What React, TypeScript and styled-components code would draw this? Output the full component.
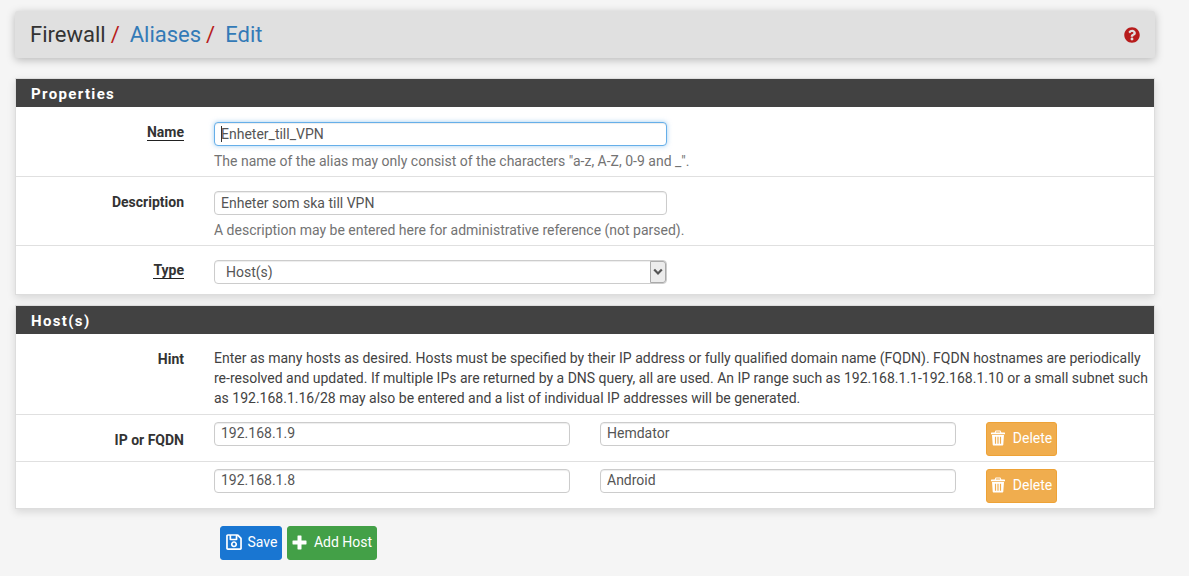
import styled, { createGlobalStyle } from "styled-components";
import { FaQuestionCircle, FaRegSave } from "react-icons/fa";

const GlobalStyle = createGlobalStyle`
  html, body {
    margin: 0;
    padding: 0;
    height: 576px;
    overflow: hidden;
    background: #f5f5f5;
    font-family: Roboto, "Liberation Sans", sans-serif;
    font-size: 14px;
    color: #212121;
  }
  * {
    box-sizing: border-box;
  }
`;

const Page = styled.div`
  padding: 11px 34px 0 15px;
  width: 1189px;
`;

const Breadcrumb = styled.div`
  display: flex;
  align-items: center;
  justify-content: space-between;
  height: 47px;
  padding: 0 15px;
  margin-bottom: 20px;
  background: #e0e0e0;
  border-radius: 3px;
  box-shadow: 0 2px 8px rgba(0, 0, 0, 0.25);
`;

const Crumbs = styled.div`
  display: flex;
  align-items: baseline;
  font-size: 22px;
  line-height: 28px;
`;

const Crumb = styled.span<{ $link?: boolean }>`
  color: ${props => (props.$link ? "#337ab7" : "#333")};
`;

const Slash = styled.span`
  color: #b71c1c;
  margin: 0 10px 0 5px;
`;

const HelpIcon = styled(FaQuestionCircle)`
  width: 16px;
  height: 16px;
  color: #b71c1c;
`;

const Panel = styled.section`
  background: #fff;
  border: 1px solid #ddd;
  margin-bottom: 10px;
  box-shadow: 0 3px 8px rgba(0, 0, 0, 0.12);
`;

const PanelHeading = styled.h2`
  margin: 0;
  height: 28px;
  padding: 0 15px;
  background: #424242;
  color: #fff;
  font-size: 15px;
  font-weight: 700;
  letter-spacing: 1.35px;
  line-height: 30px;
`;

const FormRow = styled.div<{ $height: number; $last?: boolean }>`
  display: grid;
  grid-template-columns: 198px 1fr;
  height: ${props => props.$height}px;
  border-bottom: ${props => (props.$last ? "0" : "1px solid #e0e0e0")};
`;

const Label = styled.div<{ $required?: boolean; $top?: number }>`
  justify-self: end;
  margin-right: 30px;
  padding-top: ${props => props.$top ?? 16}px;
  height: fit-content;
  font-size: 14px;
  line-height: 18px;
  font-weight: 700;
  color: #333;
  span {
    border-bottom: ${props => (props.$required ? "1px solid #212121" : "0")};
    display: inline-block;
    line-height: 16px;
  }
`;

const Field = styled.div<{ $top?: number }>`
  padding-top: ${props => props.$top ?? 15}px;
  min-width: 0;
`;

const InputWrap = styled.div<{ $width: number }>`
  position: relative;
  width: ${props => props.$width}px;
`;

const TextInput = styled.input<{ $focused?: boolean; $raised?: boolean }>`
  display: block;
  width: 100%;
  height: 24px;
  padding: 0 6px ${props => (props.$raised ? "2px" : "0")};
  border: 1px solid ${props => (props.$focused ? "#66afe9" : "#ccc")};
  border-radius: 4px;
  outline: 0;
  background: #fff;
  color: #555;
  font-family: Roboto, "Liberation Sans", sans-serif;
  font-size: 14px;
  box-shadow: ${props =>
    props.$focused
      ? "inset 0 1px 1px rgba(0,0,0,.075), 0 0 5px rgba(102,175,233,.6)"
      : "inset 0 1px 1px rgba(0,0,0,.075)"};
`;

const Caret = styled.i`
  position: absolute;
  left: 7px;
  top: 4px;
  width: 1px;
  height: 16px;
  background: #333;
`;

const SelectBox = styled.select`
  display: block;
  width: 100%;
  height: 24px;
  padding: 0 6px 0 11px;
  appearance: none;
  border: 1px solid #ccc;
  border-radius: 4px;
  outline: 0;
  background: #fff;
  color: #555;
  font-family: Roboto, "Liberation Sans", sans-serif;
  font-size: 14px;
  box-shadow: inset 0 1px 1px rgba(0, 0, 0, 0.075);
`;

const SelectArrow = styled.span`
  position: absolute;
  right: 1px;
  top: 1px;
  bottom: 1px;
  width: 16px;
  display: flex;
  align-items: center;
  justify-content: center;
  background: #ececec;
  border: 1px solid #aaa;
  border-radius: 0 3px 3px 0;
`;

const HelpText = styled.p`
  margin: 6px 0 0;
  font-size: 14px;
  line-height: 18px;
  color: #737373;
`;

const HintText = styled.p`
  margin: 0;
  padding-right: 5px;
  font-size: 14px;
  line-height: 20px;
  color: #424242;
`;

const HostFields = styled.div`
  display: flex;
  gap: 30px;
  padding-top: 7px;
`;

const ActionButton = styled.button<{ $bg: string; $border: string; $width: number; $gap: number }>`
  display: flex;
  align-items: center;
  justify-content: center;
  gap: ${props => props.$gap}px;
  width: ${props => props.$width}px;
  height: 34px;
  padding: 0 0 2px;
  border: 1px solid ${props => props.$border};
  border-radius: 3px;
  background: ${props => props.$bg};
  color: #fff;
  font-family: Roboto, "Liberation Sans", sans-serif;
  font-size: 14px;
  svg {
    flex: none;
  }
`;

const Toolbar = styled.div`
  display: flex;
  gap: 5px;
  padding: 7px 0 0 205px;
`;

function TrashIcon() {
  return (
    <svg width="14" height="16" viewBox="0 0 14 16" fill="#fff" fillRule="evenodd">
      <path d="M4.6.4h4.8l1 2.1h3.1c.3 0 .5.2.5.5v1.3H0V3c0-.3.2-.5.5-.5h3.100zM5.200 1.500l-.4 1h4.400l-.4-1z" />
      <path d="M1 5h12l-.7 9.600c0 .6-.5 1-1 1H2.700c-.5 0-1-.4-1-1zM3.900 6.800v7h1.200v-7zM6.400 6.800v7h1.200v-7zM8.900 6.800v7h1.200v-7z" />
    </svg>
  );
}

function PlusIcon() {
  return (
    <svg width="15" height="15" viewBox="0 0 15 15" fill="#fff">
      <path d="M5.500 1c0-.3.2-.5.5-.5h3c.3 0 .5.2.5.5v4.500H14c.3 0 .5.2.5.5v3c0 .3-.2.5-.5.5H9.500V14c0 .3-.2.5-.5.5H6c-.3 0-.5-.2-.5-.5V9.500H1c-.3 0-.5-.2-.5-.5V6c0-.3.2-.5.5-.5h4.500z" />
    </svg>
  );
}

type HostRowProps = { ip: string; name: string; label?: string; height: number; last?: boolean };

function HostRow({ ip, name, label, height, last }: HostRowProps) {
  return (
    <FormRow $height={height} $last={last}>
      <Label>{label}</Label>
      <HostFields>
        <InputWrap $width={356}>
          <TextInput $raised readOnly value={ip} />
        </InputWrap>
        <InputWrap $width={356}>
          <TextInput $raised readOnly value={name} />
        </InputWrap>
        <ActionButton $bg="#f0ad4e" $border="#eea236" $width={71} $gap={8}>
          <TrashIcon />
          Delete
        </ActionButton>
      </HostFields>
    </FormRow>
  );
}

export default function App() {
  return (
    <Page>
      <GlobalStyle />
      <Breadcrumb>
        <Crumbs>
          <Crumb>Firewall</Crumb>
          <Slash>/</Slash>
          <Crumb $link>Aliases</Crumb>
          <Slash>/</Slash>
          <Crumb $link>Edit</Crumb>
        </Crumbs>
        <HelpIcon />
      </Breadcrumb>

      <Panel>
        <PanelHeading>Properties</PanelHeading>
        <FormRow $height={70}>
          <Label $required>
            <span>Name</span>
          </Label>
          <Field>
            <InputWrap $width={453}>
              <TextInput $focused readOnly value="Enheter_till_VPN" />
              <Caret />
            </InputWrap>
            <HelpText>
              The name of the alias may only consist of the characters "a-z, A-Z, 0-9 and _".
            </HelpText>
          </Field>
        </FormRow>
        <FormRow $height={69}>
          <Label>
            <span>Description</span>
          </Label>
          <Field $top={14}>
            <InputWrap $width={453}>
              <TextInput readOnly value="Enheter som ska till VPN" />
            </InputWrap>
            <HelpText>A description may be entered here for administrative reference (not parsed).</HelpText>
          </Field>
        </FormRow>
        <FormRow $height={48} $last>
          <Label $required $top={15}>
            <span>Type</span>
          </Label>
          <Field $top={14}>
            <InputWrap $width={453}>
              <SelectBox defaultValue="host">
                <option value="host">Host(s)</option>
              </SelectBox>
              <SelectArrow>
                <svg width="10" height="8" viewBox="0 0 10 8">
                  <path d="M1.200 1.500 5 5.500l3.800-4" fill="none" stroke="#555" strokeWidth="2.2" />
                </svg>
              </SelectArrow>
            </InputWrap>
          </Field>
        </FormRow>
      </Panel>

      <Panel>
        <PanelHeading>Host(s)</PanelHeading>
        <FormRow $height={81}>
          <Label>
            <span>Hint</span>
          </Label>
          <Field $top={14}>
            <HintText>
              Enter as many hosts as desired. Hosts must be specified by their IP address or fully qualified domain
              name (FQDN). FQDN hostnames are periodically re-resolved and updated. If multiple IPs are returned by a
              DNS query, all are used. An IP range such as 192.168.1.1-192.168.1.10 or a small subnet such as
              192.168.1.16/28 may also be entered and a list of individual IP addresses will be generated.
            </HintText>
          </Field>
        </FormRow>
        <HostRow ip="192.168.1.9" name="Hemdator" label="IP or FQDN" height={47} />
        <HostRow ip="192.168.1.8" name="Android" height={46} last />
      </Panel>

      <Toolbar>
        <ActionButton $bg="#1976d2" $border="#1976d2" $width={62} $gap={5}>
          <FaRegSave size={18} />
          Save
        </ActionButton>
        <ActionButton $bg="#43a047" $border="#43a047" $width={90} $gap={7}>
          <PlusIcon />
          Add Host
        </ActionButton>
      </Toolbar>
    </Page>
  );
}
